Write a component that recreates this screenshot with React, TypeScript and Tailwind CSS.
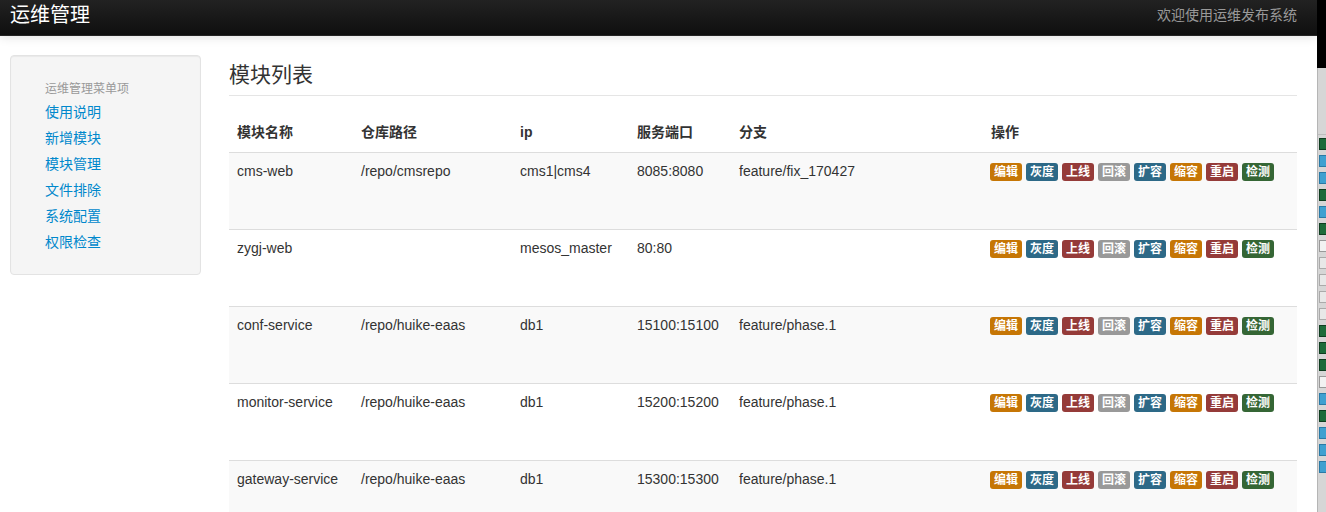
import React from 'react';

interface ModuleRow {
  name: string;
  repo: string;
  ip: string;
  port: string;
  branch: string;
}

const modules: ModuleRow[] = [
  { name: 'cms-web', repo: '/repo/cmsrepo', ip: 'cms1|cms4', port: '8085:8080', branch: 'feature/fix_170427' },
  { name: 'zygj-web', repo: '', ip: 'mesos_master', port: '80:80', branch: '' },
  { name: 'conf-service', repo: '/repo/huike-eaas', ip: 'db1', port: '15100:15100', branch: 'feature/phase.1' },
  { name: 'monitor-service', repo: '/repo/huike-eaas', ip: 'db1', port: '15200:15200', branch: 'feature/phase.1' },
  { name: 'gateway-service', repo: '/repo/huike-eaas', ip: 'db1', port: '15300:15300', branch: 'feature/phase.1' },
];

const actions = [
  { label: '编辑', color: 'bg-[#c67605]' },
  { label: '灰度', color: 'bg-[#2d6987]' },
  { label: '上线', color: 'bg-[#953b39]' },
  { label: '回滚', color: 'bg-[#999999]' },
  { label: '扩容', color: 'bg-[#2d6987]' },
  { label: '缩容', color: 'bg-[#c67605]' },
  { label: '重启', color: 'bg-[#953b39]' },
  { label: '检测', color: 'bg-[#356635]' },
];

const menu = ['使用说明', '新增模块', '模块管理', '文件排除', '系统配置', '权限检查'];

// the sliver of another window on the right edge of the screenshot
const stripItems = [
  'excel', 'blue', 'blue', 'excel', 'blue', 'excel', 'blank', 'doc', 'doc', 'doc', 'doc',
  'excel', 'excel', 'excel', 'blank', 'blue', 'excel', 'blue', 'blue', 'blue',
];

const gridCols = 'grid grid-cols-[124px_159px_117px_102px_252px_1fr]';

function App() {
  return (
    <div
      className="flex w-[1326px] h-[512px] overflow-hidden bg-white text-[14px] text-[#333]"
      style={{ fontFamily: '"Liberation Sans", "Noto Sans CJK SC", sans-serif' }}
    >
      <div className="flex flex-col w-[1317px]">
        {/* Navbar */}
        <div className="relative z-10 shrink-0 flex items-start justify-between h-[36px] pl-[10px] pr-[20px] bg-gradient-to-b from-[#222] to-[#0f0f0f] border-b border-[#252525] shadow-[0_1px_10px_rgba(0,0,0,0.12)]">
          <span className="text-[20px] leading-[30px] text-white">运维管理</span>
          <span className="text-[14px] leading-[20px] text-[#999] mt-[5px]">欢迎使用运维发布系统</span>
        </div>

        <div className="flex shrink-0 pl-[10px] pt-[19px] pr-[20px] gap-[28px]">
          {/* Sidebar */}
          <div className="w-[191px] shrink-0 self-start bg-[#f5f5f5] border border-[#e3e3e3] rounded-[4px] shadow-[inset_0_1px_1px_rgba(0,0,0,0.05)] pt-[23px] pb-[19px] pl-[34px]">
            <div className="text-[12px] leading-5 text-[#999]">运维管理菜单项</div>
            <ul>
              {menu.map((m) => (
                <li key={m} className="leading-[26px] text-[#0088cc]">
                  {m}
                </li>
              ))}
            </ul>
          </div>

          {/* Main */}
          <div className="flex-1">
            <h3 className="text-[21px] leading-[40px] font-normal border-b border-[#e5e5e5]">模块列表</h3>

            <div className="mt-[18px]">
              <div className={`${gridCols} h-[39px] border-b border-[#ddd] font-bold`}>
                {['模块名称', '仓库路径', 'ip', '服务端口', '分支', '操作'].map((h) => (
                  <div key={h} className="px-2 pt-2 leading-5">
                    {h}
                  </div>
                ))}
              </div>

              {modules.map((row, i) => (
                <div
                  key={row.name}
                  className={`${gridCols} h-[77px] border-b border-[#ddd] ${i % 2 === 0 ? 'bg-[#f9f9f9]' : 'bg-white'}`}
                >
                  <div className="px-2 pt-2 leading-5">{row.name}</div>
                  <div className="px-2 pt-2 leading-5">{row.repo}</div>
                  <div className="px-2 pt-2 leading-5">{row.ip}</div>
                  <div className="px-2 pt-2 leading-5">{row.port}</div>
                  <div className="px-2 pt-2 leading-5">{row.branch}</div>
                  <div className="flex items-start gap-1 pl-[7px] pt-[10px]">
                    {actions.map((a) => (
                      <span
                        key={a.label}
                        className={`${a.color} h-[18px] px-1 rounded-[3px] text-white text-[12px] font-bold leading-[18px]`}
                      >
                        {a.label}
                      </span>
                    ))}
                  </div>
                </div>
              ))}
            </div>
          </div>
        </div>
      </div>

      {/* Right edge strip */}
      <div className="flex flex-col w-[9px] shrink-0">
        <div className="h-[68px] shrink-0 bg-black" />
        <div className="flex-1 bg-[#d6d6d6] border-l border-[#b5b5b5]">
          <div className="h-[67px] border-b border-[#bdbdbd]" />
          <div className="flex flex-col gap-[5px] pt-[3px] pl-[1px]">
            {stripItems.map((s, i) => (
              <div
                key={i}
                className={
                  s === 'excel'
                    ? 'h-[12px] w-[8px] bg-[#1d6b3a] border border-[#0f3d20]'
                    : s === 'blue'
                    ? 'h-[12px] w-[8px] bg-[#3fa0d0] border border-[#2a7aa6]'
                    : s === 'doc'
                    ? 'h-[12px] w-[8px] bg-[#e8e8e8] border border-[#aaa]'
                    : 'h-[12px] w-[8px] bg-[#f2f2f2] border border-[#999]'
                }
              />
            ))}
          </div>
        </div>
      </div>
    </div>
  );
}

export default App;
